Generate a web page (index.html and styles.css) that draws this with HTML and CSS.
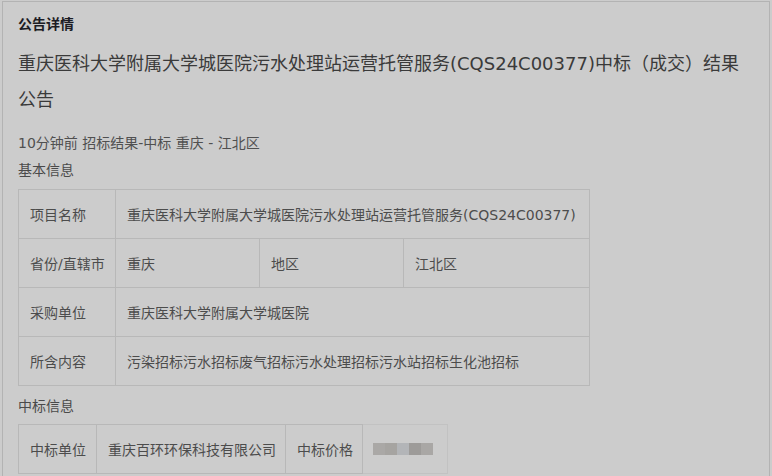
FILE: index.html
```html
<!DOCTYPE html>
<html lang="zh-CN">
<head>
<meta charset="utf-8">
<title>公告详情</title>
<link rel="stylesheet" href="styles.css">
</head>
<body>
<div class="panel">
  <div class="panel-head">公告详情</div>
  <h1 class="title">重庆医科大学附属大学城医院污水处理站运营托管服务(CQS24C00377)中标（成交）结果公告</h1>
  <div class="meta">10分钟前 招标结果-中标 重庆 - 江北区</div>

  <div class="section-label">基本信息</div>
  <table class="info basic">
    <colgroup>
      <col class="c-label"><col class="c-a"><col class="c-b"><col class="c-c">
    </colgroup>
    <tr>
      <td>项目名称</td>
      <td colspan="3">重庆医科大学附属大学城医院污水处理站运营托管服务(CQS24C00377)</td>
    </tr>
    <tr>
      <td>省份/直辖市</td>
      <td>重庆</td>
      <td>地区</td>
      <td>江北区</td>
    </tr>
    <tr>
      <td>采购单位</td>
      <td colspan="3">重庆医科大学附属大学城医院</td>
    </tr>
    <tr>
      <td>所含内容</td>
      <td colspan="3">污染招标污水招标废气招标污水处理招标污水站招标生化池招标</td>
    </tr>
  </table>

  <div class="section-label second">中标信息</div>
  <table class="info win">
    <colgroup>
      <col class="w1"><col class="w2"><col class="w3"><col class="w4">
    </colgroup>
    <tr>
      <td>中标单位</td>
      <td>重庆百环环保科技有限公司</td>
      <td>中标价格</td>
      <td class="blurred">
        <div class="mosaic">
          <span class="m1"></span><span class="m2"></span><span class="m3"></span><span class="m4"></span><span class="m5"></span>
        </div>
      </td>
    </tr>
  </table>
</div>
</body>
</html>
```

FILE: styles.css
```css
html, body {
  margin: 0;
  padding: 0;
  background: #cccccc;
}

body {
  font-family: "DejaVu Sans", "Noto Sans CJK SC", sans-serif;
  color: #4a4a4a;
  font-size: 14px;
}

.panel {
  margin: 1px 2px 0 2px;
  height: 480px;
  border: 1px solid #b3b3b3;
  border-bottom: none;
  padding: 0 0 0 15px;
  box-sizing: border-box;
  overflow: hidden;
}

.panel-head {
  margin-top: 12px;
  line-height: 20px;
  font-size: 14px;
  font-weight: 600;
  color: #1c1c24;
}

.title {
  margin: 12px 0 0 0;
  font-size: 18px;
  font-weight: normal;
  line-height: 36px;
  color: #3a3a3a;
  width: 735px;
}

.meta {
  margin-top: 15px;
  line-height: 20px;
  color: #505050;
}

.section-label {
  margin-top: 7px;
  line-height: 20px;
  color: #4a4a4a;
}

.section-label.second {
  margin-top: 10px;
}

.info {
  border-collapse: collapse;
  table-layout: fixed;
  margin-top: 9px;
}

.info td {
  border: 1px solid #b8b8b8;
  height: 48px;
  padding: 0 0 0 11px;
  color: #4c4c4c;
  white-space: nowrap;
  vertical-align: middle;
}

.basic {
  width: 571px;
}

.basic .c-label { width: 97px; }
.basic .c-a { width: 144px; }
.basic .c-b { width: 144px; }
.basic .c-c { width: 186px; }

.win {
  margin-top: 8px;
  width: 429px;
}

.win .w1 { width: 78px; }
.win .w2 { width: 189px; }
.win .w3 { width: 77px; }
.win .w4 { width: 85px; }

.info td.blurred {
  border-color: #c2c2c2;
  padding-left: 10px;
}

.mosaic {
  display: flex;
  height: 12px;
}

.mosaic span {
  width: 12px;
  height: 12px;
}

.mosaic .m1 { background: #aaa8a6; }
.mosaic .m2 { background: #a6a4a1; }
.mosaic .m3 { background: #b3b5b8; }
.mosaic .m4 { background: #9d9b99; }
.mosaic .m5 { background: #a9a7a5; }
```
